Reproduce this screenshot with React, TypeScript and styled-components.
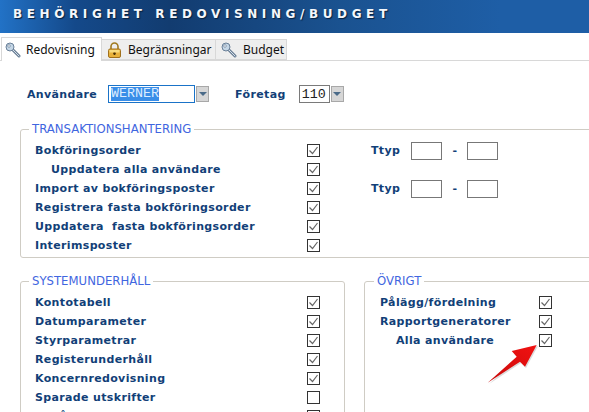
import styled, { createGlobalStyle } from 'styled-components'

const Global = createGlobalStyle`
  html, body { margin: 0; padding: 0; background: #fff; overflow: hidden; }
  body { width: 589px; height: 412px; }
`

// ── Header and tabs ───────────────────────────────────────────────────────────

const Root = styled.div`
  position: relative;
`

const Page = styled.div`
  width: 589px;
  height: 412px;
  overflow: hidden;
  font-family: 'DejaVu Sans', Verdana, sans-serif;
`

const Header = styled.div`
  height: 33px;
  display: flex;
  align-items: center;
  padding: 0 0 6px 13px;
  box-sizing: border-box;
  background: linear-gradient(90deg, #2272c6 0, #14498a 75px, #123c70 170px, #1a5290 340px, #1e5ea6 500px, #1e5ea6 100%);
`

const Title = styled.div`
  font: bold 12px 'DejaVu Sans', Verdana, sans-serif;
  letter-spacing: 4.6px;
  color: #f4f7fb;
  text-shadow: 1px 1px 1px #07213f;
  white-space: nowrap;
`

const TabBar = styled.div`
  height: 28px;
  padding-left: 1px;
  display: flex;
  align-items: flex-end;
  box-sizing: border-box;
  border-bottom: 1px solid #d8d8d8;
`

const Tab = styled.div<{ $active?: boolean; $width: number }>`
  width: ${(p) => p.$width}px;
  height: ${(p) => (p.$active ? 24 : 21)}px;
  box-sizing: border-box;
  display: flex;
  align-items: center;
  gap: ${(p) => (p.$active ? 5 : 6)}px;
  padding-left: ${(p) => (p.$active ? 3 : 5)}px;
  margin-bottom: ${(p) => (p.$active ? -1 : 0)}px;
  background: ${(p) => (p.$active ? '#fff' : '#eeeeee')};
  border: 1px solid #d8d8d8;
  border-bottom: ${(p) => (p.$active ? 'none' : '1px solid #d8d8d8')};
  border-left-width: ${(p) => (p.$active ? 1 : 0)}px;
  font: 12px 'Noto Sans', Tahoma, sans-serif;
  color: #111;
`

// ── Form ──────────────────────────────────────────────────────────────────────

const UserRow = styled.div`
  display: flex;
  align-items: center;
  height: 20px;
  margin: 23px 0 0 27px;
`

const Label = styled.span<{ $indent?: boolean }>`
  font: bold 11px 'DejaVu Sans', Verdana, sans-serif;
  letter-spacing: 0.35px;
  color: #123f78;
  white-space: pre;
  padding-left: ${(p) => (p.$indent ? 16 : 0)}px;
`

const UserLabel = styled(Label)<{ $left?: number }>`
  margin-left: ${(p) => p.$left ?? 0}px;
`

const TextBox = styled.div<{ $w: number; $left: number; $focus?: boolean }>`
  width: ${(p) => p.$w}px;
  margin-left: ${(p) => p.$left}px;
  height: 18px;
  box-sizing: border-box;
  border: 1px solid ${(p) => (p.$focus ? '#1a73c8' : '#7a7a7a')};
  font: 13.33px 'Liberation Mono', monospace;
  color: #222;
  display: flex;
  align-items: center;
  padding: 0 2px;
`

const Selected = styled.span`
  background: #3a8ee8;
  color: #dcecff;
  line-height: 14px;
`

const Arrow = styled.div`
  width: 13px;
  height: 16px;
  box-sizing: border-box;
  margin-left: 1px;
  border: 1px solid #a8a8a8;
  background: #d6d6d6;
  display: flex;
  align-items: center;
  justify-content: center;
`

const Caret = styled.div`
  width: 0;
  height: 0;
  border-left: 4px solid transparent;
  border-right: 4px solid transparent;
  border-top: 4px solid #4a6a88;
`

const Panel = styled.fieldset`
  margin: 0;
  padding: 5px 0 0 14px;
  box-sizing: border-box;
  border: 1px solid #cfccc4;
  border-radius: 3px;
  min-width: 0;
  flex: none;
`

const Legend = styled.legend`
  padding: 0 3px;
  margin-left: -6px;
  font: 11.7px 'DejaVu Sans', Verdana, sans-serif;
  color: #3f66e0;
  line-height: 13px;
`

const TopPanel = styled(Panel)`
  margin: 19px 0 0 20px;
  width: 580px;
  height: 135px;
  display: flex;
`

const BottomWrap = styled.div`
  display: flex;
  gap: 19px;
  margin: 17px 0 0 20px;
`

const LeftPanel = styled(Panel)`
  width: 325px;
  height: 160px;
`

const RightPanel = styled(Panel)`
  width: 240px;
  height: 160px;
  padding-left: 15px;
`

const Rows = styled.div`
  width: 336px;
  flex: none;
`

const Row = styled.div<{ $width?: number }>`
  height: 19px;
  display: flex;
  align-items: center;
  justify-content: space-between;
  width: ${(p) => p.$width ?? 285}px;
`

const Box = styled.div`
  width: 13px;
  height: 13px;
  box-sizing: border-box;
  border: 1px solid #333;
  background: #fff;
  display: flex;
  align-items: center;
  justify-content: center;
`

const TtypColumn = styled.div`
  display: flex;
  flex-direction: column;
`

const TtypRow = styled.div<{ $gap?: number }>`
  height: 19px;
  margin-bottom: ${(p) => p.$gap ?? 0}px;
  display: flex;
  align-items: center;
`

const Small = styled.div<{ $left?: number }>`
  width: 31px;
  height: 18px;
  box-sizing: border-box;
  border: 1px solid #777;
  background: #fff;
  margin-left: ${(p) => p.$left ?? 0}px;
`

const Dash = styled.span`
  font: bold 11px 'DejaVu Sans', sans-serif;
  color: #123f78;
  width: 25px;
  text-align: center;
`

const RedArrow = styled.svg`
  position: absolute;
  left: 484px;
  top: 342px;
`

// ── Icons ─────────────────────────────────────────────────────────────────────

function KeyIcon() {
  return (
    <svg width="16" height="16" viewBox="0 0 16 16">
      <path d="M7 7l7 7" stroke="#6a7f96" strokeWidth="3" strokeLinecap="round" />
      <path d="M7 7l7 7" stroke="#d5dfe8" strokeWidth="1" strokeLinecap="round" />
      <circle cx="5" cy="5" r="4" fill="#c4d6e6" stroke="#6a8098" />
      <circle cx="4" cy="4" r="1.3" fill="#fff" stroke="#6a8098" strokeWidth="0.7" />
    </svg>
  )
}

function LockIcon() {
  return (
    <svg width="15" height="16" viewBox="0 0 15 16">
      <path d="M4 7V4.5a3.5 3.5 0 0 1 7 0V7" fill="none" stroke="#a07a20" strokeWidth="1.6" />
      <rect x="1.5" y="7" width="12" height="8.5" rx="1.5" fill="#e8b23c" stroke="#a0701c" />
      <rect x="2.5" y="8" width="10" height="2.5" fill="#f8dc80" />
      <path d="M7.5 10.5v2.5M6.2 11.5h2.6" stroke="#4a3208" strokeWidth="1.4" />
    </svg>
  )
}

function Check({ on = true }: { on?: boolean }) {
  return (
    <Box>
      {on && (
        <svg width="11" height="11" viewBox="0 0 11 11">
          <path d="M1.5 5.5L4.5 8.5L9.5 2" fill="none" stroke="#666" strokeWidth="1.2" />
        </svg>
      )}
    </Box>
  )
}

function Option({ label, indent, on, width }: { label: string; indent?: boolean; on?: boolean; width?: number }) {
  return (
    <Row $width={width}>
      <Label $indent={indent}>{label}</Label>
      <Check on={on} />
    </Row>
  )
}

export default function App() {
  return (
    <Root>
      <Global />
      <Page>
        <Header>
          <Title>BEHÖRIGHET REDOVISNING/BUDGET</Title>
        </Header>
        <TabBar>
          <Tab $active $width={101}><KeyIcon />Redovisning</Tab>
          <Tab $width={114}><LockIcon />Begränsningar</Tab>
          <Tab $width={71}><KeyIcon />Budget</Tab>
        </TabBar>
        <UserRow>
          <UserLabel>Användare</UserLabel>
          <TextBox $w={87} $left={11} $focus><Selected>WERNER</Selected></TextBox>
          <Arrow><Caret /></Arrow>
          <UserLabel $left={26}>Företag</UserLabel>
          <TextBox $w={31} $left={13}>110</TextBox>
          <Arrow><Caret /></Arrow>
        </UserRow>
        <TopPanel>
          <Legend>TRANSAKTIONSHANTERING</Legend>
          <Rows>
            <Option label="Bokföringsorder" />
            <Option label="Uppdatera alla användare" indent />
            <Option label="Import av bokföringsposter" />
            <Option label="Registrera fasta bokföringsorder" />
            <Option label="Uppdatera  fasta bokföringsorder" />
            <Option label="Interimsposter" />
          </Rows>
          <TtypColumn>
            <TtypRow $gap={19}>
              <Label>Ttyp</Label><Small $left={11} /><Dash>-</Dash><Small />
            </TtypRow>
            <TtypRow>
              <Label>Ttyp</Label><Small $left={11} /><Dash>-</Dash><Small />
            </TtypRow>
          </TtypColumn>
        </TopPanel>
        <BottomWrap>
          <LeftPanel>
            <Legend>SYSTEMUNDERHÅLL</Legend>
            <Option label="Kontotabell" />
            <Option label="Datumparameter" />
            <Option label="Styrparametrar" />
            <Option label="Registerunderhåll" />
            <Option label="Koncernredovisning" />
            <Option label="Sparade utskrifter" on={false} />
            <Option label="Bokårstabell" on={false} />
          </LeftPanel>
          <RightPanel>
            <Legend>ÖVRIGT</Legend>
            <Option label="Pålägg/fördelning" width={172} />
            <Option label="Rapportgeneratorer" width={172} />
            <Option label="Alla användare" indent width={172} />
          </RightPanel>
        </BottomWrap>
      </Page>
      <RedArrow width="70" height="48" viewBox="0 0 70 48">
        <defs>
          <linearGradient id="redFill" x1="0" y1="1" x2="1" y2="0">
            <stop offset="0" stopColor="#c80a0a" />
            <stop offset="1" stopColor="#f21212" />
          </linearGradient>
        </defs>
        <path d="M5 42L37 21L42 26L54 4L29 10L34 16Z" fill="#999" opacity="0.35" />
        <path d="M3.7 40.7L36 19.7L41 24.7L52.7 3L27.7 9L32.7 14.7Z" fill="url(#redFill)" />
      </RedArrow>
    </Root>
  )
}
